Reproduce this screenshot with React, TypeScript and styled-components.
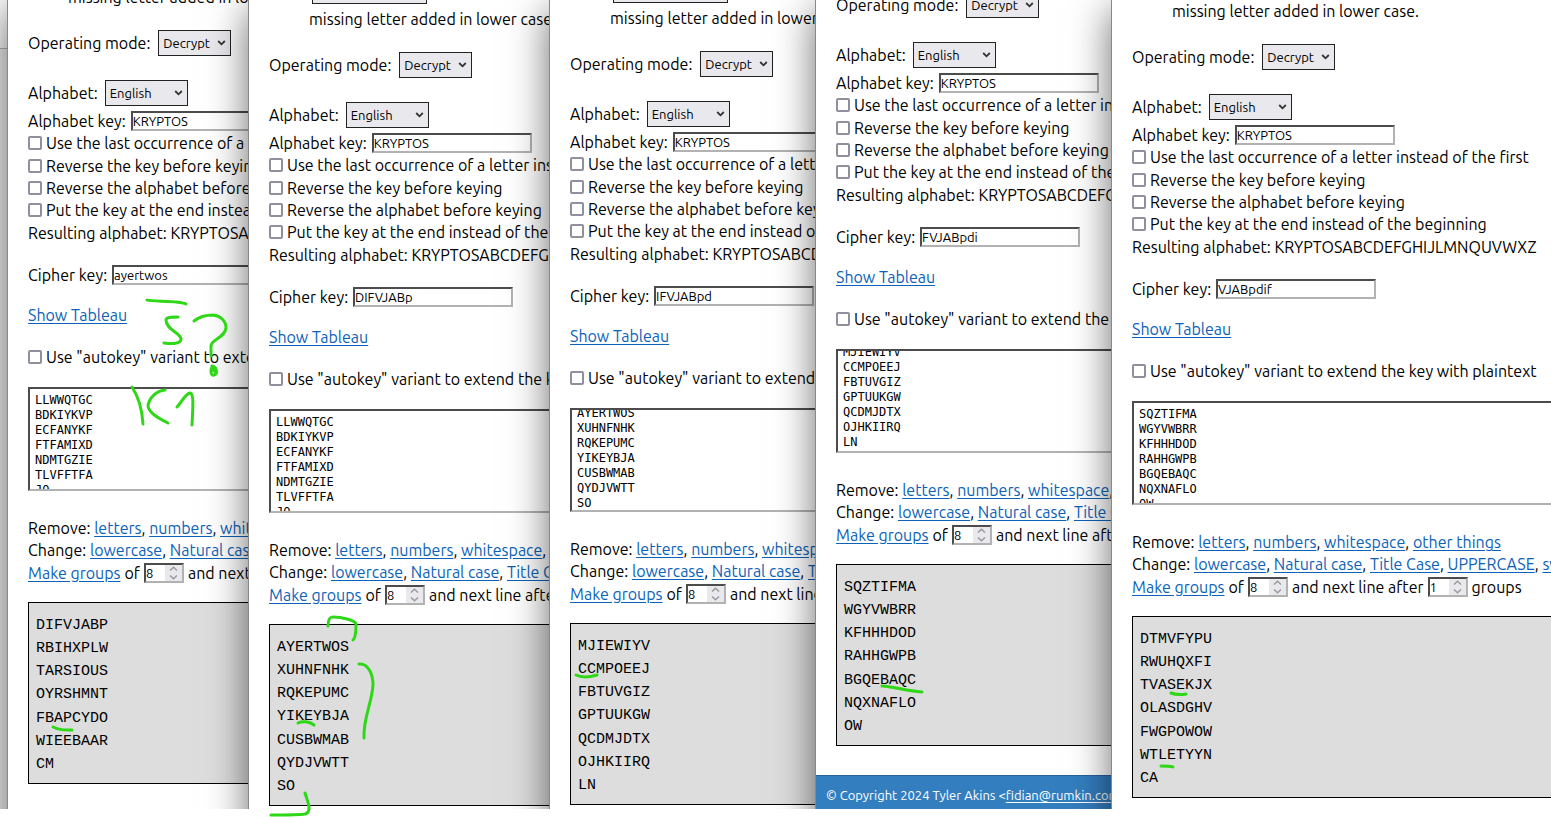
import React, { useEffect, useId, useRef } from 'react';
import styled, { createGlobalStyle } from 'styled-components';

const sans = `Ubuntu, "Open Sans", "Noto Sans", sans-serif`;
const linkBlue = '#0c62b8';
const ink = '#2ed816';

const GlobalStyle = createGlobalStyle`
  *, *::before, *::after { box-sizing: border-box; }
  body {
    margin: 0;
    background: #fff;
    color: #000;
    font: 16px/22px ${sans};
  }
`;

const Desk = styled.main`
  display: grid;
  grid-template-columns: 8px 241fr 301fr 266fr 296fr 439fr;
  grid-template-rows: minmax(0, 1fr);
  height: 100vh;
  padding-bottom: 8px;
  overflow: hidden;
`;

const Gutter = styled.div`
  background: #f0f0f0;
  &::before {
    content: '';
    display: block;
    height: 49px;
    border-bottom: 1px solid #b4b4b4;
    background: #fafafa;
  }
`;

const Column = styled.section`
  position: relative;
  min-width: 0;
  min-height: 0;
`;

const Sheet = styled.div`
  position: relative;
  height: 100%;
  clip-path: inset(0 0 0 -60px);
  &::before {
    content: '';
    position: absolute;
    inset: 0 0 -60px 0;
    box-shadow: 0 0 0 1px #888, 0 10px 38px rgba(0, 0, 0, 0.6);
  }
`;

const Viewport = styled.div`
  position: relative;
  height: 100%;
  overflow: hidden;
  background: #fff;
`;

const Page = styled.div<{ $scroll: number }>`
  margin-top: ${(p) => -p.$scroll}px;
  white-space: nowrap;
`;

const Form = styled.form`
  display: flex;
  flex-direction: column;
  padding-left: 20px;
`;

const Intro = styled.div`
  display: flex;
  flex-direction: column;
  gap: 4px;
  padding-left: 40px;
`;

const Field = styled.div<{ $top: number; $gap?: number }>`
  display: flex;
  align-items: center;
  gap: ${(p) => p.$gap ?? 5}px;
  margin-top: ${(p) => p.$top}px;
`;

const SelectBox = styled.span<{ $width: number; $indent?: number }>`
  position: relative;
  display: block;
  flex: none;
  width: ${(p) => p.$width}px;
  height: 26px;
  margin-left: ${(p) => p.$indent ?? 0}px;
  svg {
    position: absolute;
    right: 5px;
    top: 10px;
    pointer-events: none;
  }
`;

const NativeSelect = styled.select`
  appearance: none;
  width: 100%;
  height: 100%;
  padding: 0 0 0 4px;
  border: 1px solid #222;
  border-radius: 0;
  background: #e9e9ed;
  color: #000;
  font: 13px ${sans};
`;

const TextInput = styled.input`
  flex: none;
  width: 160px;
  height: 20px;
  padding: 0;
  border: 2px solid;
  border-color: #4c4c4c #b2b2b2 #b2b2b2 #4c4c4c;
  background: #fff;
  color: #000;
  font: 13px ${sans};
`;

const Rows = styled.div<{ $top: number; $height: number }>`
  display: grid;
  grid-auto-rows: 1fr;
  align-items: center;
  height: ${(p) => p.$height}px;
  margin-top: ${(p) => p.$top}px;
`;

const CheckLabel = styled.label<{ $top?: number }>`
  display: flex;
  align-items: center;
  gap: 4px;
  margin-top: ${(p) => p.$top ?? 0}px;
`;

const Checkbox = styled.input`
  appearance: none;
  flex: none;
  width: 14px;
  height: 14px;
  margin: 0;
  border: 2px solid #8f8f9d;
  border-radius: 2px;
  background: #fff;
`;

const Link = styled.a`
  color: ${linkBlue};
  text-decoration: underline;
  text-underline-offset: 2px;
`;

const TableauLine = styled.div`
  margin-top: 18px;
`;

const CipherText = styled.textarea`
  display: block;
  width: 100%;
  height: 104px;
  margin: 19px 0 0;
  padding: 4px 5px;
  border: 2px solid;
  border-color: #4c4c4c #b2b2b2 #b2b2b2 #4c4c4c;
  border-right: 0;
  border-radius: 0;
  resize: none;
  scrollbar-width: none;
  background: #fff;
  color: #000;
  font: 12px/15px "DejaVu Sans Mono", monospace;
`;

const GroupLine = styled.div`
  display: flex;
  align-items: center;
  gap: 4px;
`;

const Stepper = styled.span`
  display: flex;
  flex: none;
  width: 40px;
  height: 20px;
  border: 2px solid;
  border-color: #4c4c4c #b2b2b2 #b2b2b2 #4c4c4c;
  svg {
    flex: none;
    background: #e9e9ed;
  }
`;

const StepperInput = styled.input`
  appearance: textfield;
  flex: 1;
  min-width: 0;
  padding: 0;
  border: 0;
  background: #fff;
  color: #000;
  font: 13px ${sans};
  &::-webkit-inner-spin-button { display: none; }
`;

const Output = styled.output`
  display: grid;
  grid-auto-rows: 1fr;
  align-items: center;
  height: 182px;
  margin-top: 18px;
  padding: 11px 7px 6px;
  border: 1px solid #000;
  border-right: 0;
  background: #ddd;
  font-family: "Liberation Mono", monospace;
  font-size: 15px;
`;

const Footer = styled.footer`
  height: 60px;
  margin-top: 29px;
  padding: 8px 10px;
  border-top: 1px solid #2a6098;
  background: #337ebf;
  color: #fff;
  font-size: 13px;
  a { color: #fff; text-underline-offset: 2px; }
`;

const Ink = styled.svg`
  position: absolute;
  z-index: 2;
  left: 0;
  top: 0;
  width: 100%;
  height: 100%;
  overflow: visible;
  pointer-events: none;
  fill: none;
  stroke: ${ink};
  stroke-width: 3;
  stroke-linecap: round;
  stroke-linejoin: round;
`;

const Chevron = () => (
  <svg width="9" height="6" viewBox="0 0 9 6" fill="none" stroke="#333" strokeWidth="1.800">
    <path d="M1.200 1l3.300 3.300L7.800 1" />
  </svg>
);

const SpinArrows = () => (
  <svg width="17" height="16" viewBox="0 0 17 16" fill="none" stroke="#9a9a9e" strokeWidth="1.500">
    <path d="M5 5.500l3.500-3.300 3.500 3.300M5 10.500l3.500 3.300 3.500-3.300" />
  </svg>
);

function Select({ id, value, width, indent }: { id?: string; value: string; width: number; indent?: number }) {
  return (
    <SelectBox $width={width} $indent={indent}>
      <NativeSelect id={id} aria-label={id ? undefined : 'Letter handling'} defaultValue={value}>
        <option>{value}</option>
      </NativeSelect>
      <Chevron />
    </SelectBox>
  );
}

function NumberBox({ value, label }: { value: number; label: string }) {
  return (
    <Stepper>
      <StepperInput type="number" defaultValue={value} aria-label={label} />
      <SpinArrows />
    </Stepper>
  );
}

function Links({ items }: { items: string[] }) {
  return (
    <>
      {items.map((item, i) => (
        <React.Fragment key={item}>
          {i > 0 && ', '}
          <Link href="#">{item}</Link>
        </React.Fragment>
      ))}
    </>
  );
}

type Shot = {
  scroll: number;
  textScroll: number;
  cipherKey: string;
  input: string[];
  output: string[];
  strokes: string[];
};

const keyOptions = [
  'Use the last occurrence of a letter instead of the first',
  'Reverse the key before keying',
  'Reverse the alphabet before keying',
  'Put the key at the end instead of the beginning',
];

function CipherColumn({ shot }: { shot: Shot }) {
  const id = useId();
  const text = useRef<HTMLTextAreaElement>(null);

  useEffect(() => {
    if (text.current) text.current.scrollTop = shot.textScroll;
  }, [shot.textScroll]);

  return (
    <Column>
      <Sheet>
        <Viewport>
          <Page $scroll={shot.scroll}>
            <Form>
              <Intro>
                <Select value="" width={115} indent={3} />
                <div>missing letter added in lower case.</div>
              </Intro>
              <Field $top={22} $gap={8}>
                <label htmlFor={id + 'mode'}>Operating mode:</label>
                <Select id={id + 'mode'} value="Decrypt" width={73} />
              </Field>
              <Field $top={24} $gap={7}>
                <label htmlFor={id + 'alphabet'}>Alphabet:</label>
                <Select id={id + 'alphabet'} value="English" width={83} />
              </Field>
              <Field $top={4}>
                <label htmlFor={id + 'key'}>Alphabet key:</label>
                <TextInput id={id + 'key'} defaultValue="KRYPTOS" />
              </Field>
              <Rows $top={0} $height={112}>
                {keyOptions.map((option) => (
                  <CheckLabel key={option}>
                    <Checkbox type="checkbox" />
                    {option}
                  </CheckLabel>
                ))}
                <div>Resulting alphabet: KRYPTOSABCDEFGHIJLMNQUVWXZ</div>
              </Rows>
              <Field $top={20}>
                <label htmlFor={id + 'cipher'}>Cipher key:</label>
                <TextInput id={id + 'cipher'} defaultValue={shot.cipherKey} />
              </Field>
              <TableauLine>
                <Link href="#">Show Tableau</Link>
              </TableauLine>
              <CheckLabel $top={20}>
                <Checkbox type="checkbox" />
                Use "autokey" variant to extend the key with plaintext
              </CheckLabel>
              <CipherText ref={text} aria-label="Cipher text" spellCheck={false} defaultValue={shot.input.join('\n')} />
              <Rows $top={26} $height={67}>
                <div>
                  Remove: <Links items={['letters', 'numbers', 'whitespace', 'other things']} />
                </div>
                <div>
                  Change: <Links items={['lowercase', 'Natural case', 'Title Case', 'UPPERCASE', 'swap case']} />
                </div>
                <GroupLine>
                  <Link href="#">Make groups</Link> of <NumberBox value={8} label="Group size" />
                  <span>and next line after</span>
                  <NumberBox value={1} label="Groups per line" /> groups
                </GroupLine>
              </Rows>
              <Output>
                {shot.output.map((line) => (
                  <span key={line}>{line}</span>
                ))}
              </Output>
            </Form>
            <Footer>
              © Copyright 2024 Tyler Akins &lt;<a href="#">fidian@rumkin.com</a>&gt;
            </Footer>
          </Page>
        </Viewport>
      </Sheet>
      <Ink aria-hidden="true">
        {shot.strokes.map((d) => (
          <path key={d} d={d} />
        ))}
      </Ink>
    </Column>
  );
}

const k1 = ['LLWWQTGC', 'BDKIYKVP', 'ECFANYKF', 'FTFAMIXD', 'NDMTGZIE', 'TLVFFTFA', 'JQ'];

const shots: Shot[] = [
  {
    scroll: 44,
    textScroll: 0,
    cipherKey: 'ayertwos',
    input: k1,
    output: ['DIFVJABP', 'RBIHXPLW', 'TARSIOUS', 'OYRSHMNT', 'FBAPCYDO', 'WIEEBAAR', 'CM'],
    strokes: [
      'M139 300C143 302 172 300 178 304',
      'M170 317C163 317 158 317 158 320C158 330 173 333 173 339C173 344 164 344 156 343',
      'M186 321C191 317 197 315 205 315C213 316 218 321 218 328C217 338 203 339 203 346L203 356',
      'M204 367C202 371 203 376 206 375C210 374 209 367 204 366L206 371',
      'M124 387C130 396 134 407 135 424',
      'M157 390C148 391 141 398 140 406C141 413 150 418 160 423',
      'M169 407C173 403 177 394 182 393C186 394 185 404 184 425',
      'M45 727C51 730 55 730 64 730',
    ],
  },
  {
    scroll: 22,
    textScroll: 0,
    cipherKey: 'DIFVJABp',
    input: k1,
    output: ['AYERTWOS', 'XUHNFNHK', 'RQKEPUMC', 'YIKEYBJA', 'CUSBWMAB', 'QYDJVWTT', 'SO'],
    strokes: [
      'M79 626C79 620 80 617 84 617C92 617 106 620 107 624C107 630 107 638 104 640',
      'M110 664C119 663 124 674 124 685C123 703 114 718 115 738',
      'M49 723C53 721 60 721 65 725',
      'M56 793C58 800 64 812 56 814C50 815 35 815 22 815',
    ],
  },
  {
    scroll: 23,
    textScroll: 8,
    cipherKey: 'IFVJABpd',
    input: ['AYERTWOS', 'XUHNFNHK', 'RQKEPUMC', 'YIKEYBJA', 'CUSBWMAB', 'QYDJVWTT', 'SO'],
    output: ['MJIEWIYV', 'CCMPOEEJ', 'FBTUVGIZ', 'GPTUUKGW', 'QCDMJDTX', 'OJHKIIRQ', 'LN'],
    strokes: ['M26 675C32 678 40 677 47 675'],
  },
  {
    scroll: 82,
    textScroll: 10,
    cipherKey: 'FVJABpdi',
    input: ['MJIEWIYV', 'CCMPOEEJ', 'FBTUVGIZ', 'GPTUUKGW', 'QCDMJDTX', 'OJHKIIRQ', 'LN'],
    output: ['SQZTIFMA', 'WGYVWBRR', 'KFHHHDOD', 'RAHHGWPB', 'BGQEBAQC', 'NQXNAFLO', 'OW'],
    strokes: ['M66 686C80 687 90 691 106 692'],
  },
  {
    scroll: 30,
    textScroll: 0,
    cipherKey: 'VJABpdif',
    input: ['SQZTIFMA', 'WGYVWBRR', 'KFHHHDOD', 'RAHHGWPB', 'BGQEBAQC', 'NQXNAFLO', 'OW'],
    output: ['DTMVFYPU', 'RWUHQXFI', 'TVASEKJX', 'OLASDGHV', 'FWGPOWOW', 'WTLETYYN', 'CA'],
    strokes: ['M59 693C64 695 68 695 74 694', 'M49 766C53 766 57 766 61 767'],
  },
];

export default function App() {
  return (
    <>
      <GlobalStyle />
      <Desk>
        <Gutter />
        {shots.map((shot) => (
          <CipherColumn key={shot.cipherKey} shot={shot} />
        ))}
      </Desk>
    </>
  );
}
